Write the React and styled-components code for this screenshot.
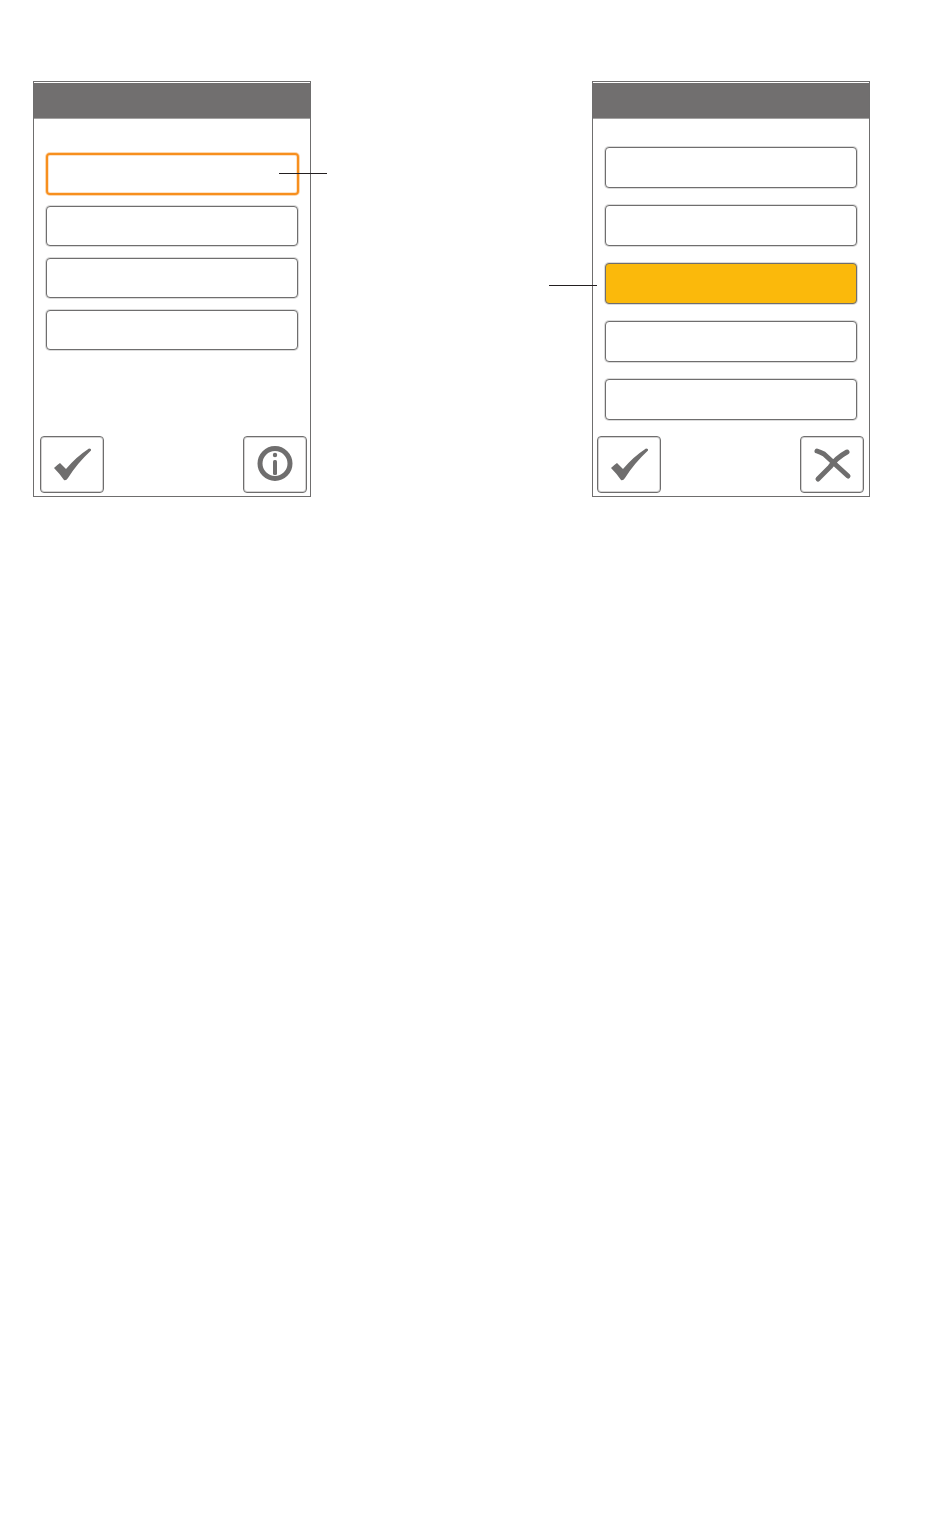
import React from "react";
import styled, { createGlobalStyle } from "styled-components";

const GlobalStyle = createGlobalStyle`
  html, body {
    margin: 0;
    background: #ffffff;
    font-family: "Liberation Sans", Arial, sans-serif;
  }
`;

const Page = styled.div`
  width: 950px;
  height: 1538px;
  box-sizing: border-box;
  padding: 81px 0 0 33px;
  display: flex;
  align-items: flex-start;
  gap: 281px;
`;

const Panel = styled.section`
  position: relative;
  width: 278px;
  height: 416px;
  box-sizing: border-box;
  border: 1px solid #6f6e6e;
  display: flex;
  flex-direction: column;
`;

const TitleBar = styled.header`
  margin-top: 1px;
  height: 35px;
  flex: none;
  background: #716f6f;
  border-bottom: 1px solid #a3a2a2;
`;

const OptionList = styled.div`
  display: flex;
  flex-direction: column;
  gap: ${(props) => props.$gap}px;
  padding: ${(props) => props.$top}px 12px 0;
`;

const Option = styled.div`
  height: ${(props) => props.$height}px;
  box-sizing: border-box;
  border: 1px solid #6f6e6e;
  box-shadow: 0 0 0 1px rgba(111, 110, 110, 0.25);
  border-radius: 4px;
  background: ${(props) => (props.$selected ? "#fbb90b" : "#ffffff")};
`;

const FocusedOption = styled.div`
  height: 42px;
  margin-right: -1px;
  margin-bottom: -1px;
  box-sizing: border-box;
  border: 2px solid #f78f1e;
  box-shadow:
    0 0 0 1px rgba(247, 143, 30, 0.35),
    inset 0 0 0 1px rgba(247, 143, 30, 0.25);
  border-radius: 4px;
  background: #ffffff;
`;

const Footer = styled.footer`
  margin-top: auto;
  display: flex;
  justify-content: space-between;
  align-items: flex-end;
  padding: 0 ${(props) => props.$right}px 3px ${(props) => props.$left}px;
`;

const IconButton = styled.button`
  width: 64px;
  height: 57px;
  padding: 0;
  box-sizing: border-box;
  background: #ffffff;
  border: 1px solid #6f6e6e;
  box-shadow: inset 0 0 0 1px rgba(111, 110, 110, 0.3);
  border-radius: 4px;

  svg {
    display: block;
    width: 62px;
    height: 55px;
  }
`;

const Leader = styled.span`
  position: absolute;
  top: ${(props) => props.$top}px;
  left: ${(props) => props.$left}px;
  width: 48px;
  height: 1px;
  background: #231f20;
`;

const CheckIcon = () => (
  <svg viewBox="1 1 62 55">
    <path
      fill="#6f6e6e"
      d="M14 32 Q17 29 20 27 Q23 30 26 33 Q36 21 49 12.5 Q51.5 12.5 51 14.5 Q37 27.5 28 42 Q26 45 24 44 Q20 38 14 32 Z"
    />
  </svg>
);

const InfoIcon = () => (
  <svg viewBox="1 1 62 55">
    <circle cx="32" cy="27.5" r="15" fill="none" stroke="#6f6e6e" strokeWidth="5" />
    <circle cx="32" cy="19" r="2.2" fill="#6f6e6e" />
    <rect x="30" y="24" width="4" height="15" rx="1.5" fill="#6f6e6e" />
  </svg>
);

const CloseIcon = () => (
  <svg viewBox="1 1 62 55">
    <path
      fill="none"
      stroke="#6f6e6e"
      strokeWidth="5"
      strokeLinecap="round"
      d="M17 15 Q20 16 24 18 Q37 30 48 40 M47 16 Q36 22 30 31 Q24 37 18 43"
    />
  </svg>
);

function App() {
  return (
    <Page>
      <GlobalStyle />
      <Panel>
        <TitleBar />
        <OptionList $top={34} $gap={12}>
          <FocusedOption />
          <Option $height={40} />
          <Option $height={40} />
          <Option $height={40} />
        </OptionList>
        <Footer $left={6} $right={3}>
          <IconButton aria-label="Confirm">
            <CheckIcon />
          </IconButton>
          <IconButton aria-label="Info">
            <InfoIcon />
          </IconButton>
        </Footer>
        <Leader $top={91} $left={245} />
      </Panel>
      <Panel>
        <TitleBar />
        <OptionList $top={28} $gap={17}>
          <Option $height={41} />
          <Option $height={41} />
          <Option $height={41} $selected />
          <Option $height={41} />
          <Option $height={41} />
        </OptionList>
        <Footer $left={4} $right={5}>
          <IconButton aria-label="Confirm">
            <CheckIcon />
          </IconButton>
          <IconButton aria-label="Close">
            <CloseIcon />
          </IconButton>
        </Footer>
        <Leader $top={203} $left={-44} />
      </Panel>
    </Page>
  );
}

export default App;
